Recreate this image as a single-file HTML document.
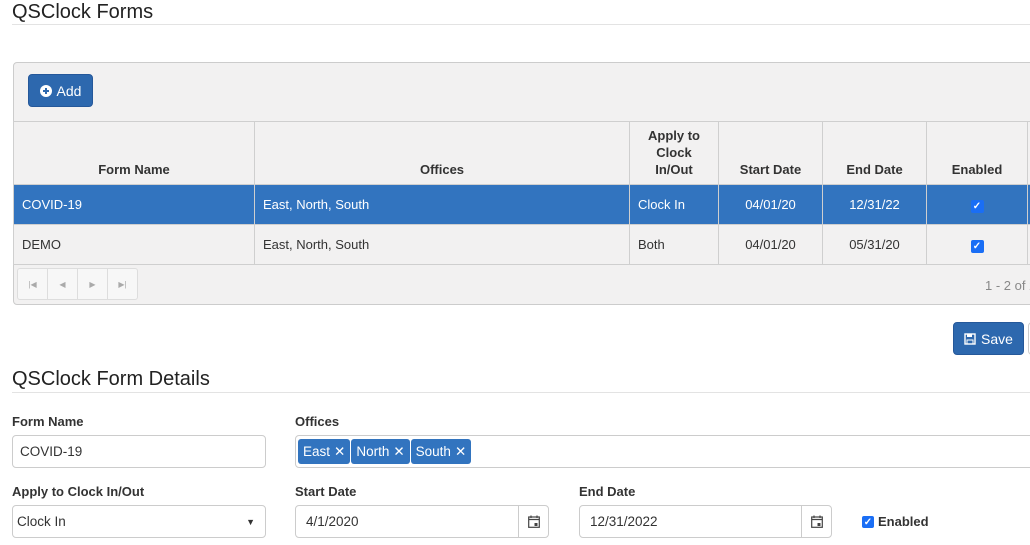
<!DOCTYPE html>
<html><head><style>
*{box-sizing:border-box;margin:0;padding:0}
body{width:1030px;height:545px;overflow:hidden;background:#fff;font-family:"Liberation Sans",sans-serif;color:#333;position:relative;font-size:13px}
.a{position:absolute}
h1{position:absolute;font-weight:normal;font-size:20px;color:#222}
.hr{position:absolute;left:12px;right:0;height:1px;background:#e3e3e3}
.btn{position:absolute;background:#2d68ae;border:1px solid #25589a;border-radius:4px;color:#fff;font-size:14px;display:flex;align-items:center;justify-content:center;gap:5px}
table{position:absolute;border-collapse:collapse;left:13px;top:121px;table-layout:fixed;width:1034px}
td,th{border:1px solid #cfcfcf;padding:0 8px;font-size:13px;overflow:hidden;white-space:nowrap}
th{height:63px;vertical-align:bottom;padding-bottom:6px;font-weight:bold;text-align:center;line-height:17px;white-space:normal}
td{height:40px}
tr.sel td{background:#3274bf;color:#fff}
.c{text-align:center}
.cb{display:inline-block;width:13px;height:13px;background:#1a6ef5;border-radius:2px;color:#fff;font-size:10px;line-height:13px;text-align:center;font-weight:bold}
label{position:absolute;font-weight:bold;font-size:13px;color:#333}
.inp{position:absolute;border:1px solid #ccc;border-radius:4px;height:33px;background:#fff;font-size:13.5px;padding-left:7px;display:flex;align-items:center}
.chip{background:#3274bf;color:#fff;border-radius:3px;height:25px;padding:0 5px;display:flex;align-items:center;gap:4px;margin-right:1px;font-size:13.5px}
.add{position:absolute;right:0;top:0;bottom:0;width:30px;border-left:1px solid #ccc;display:flex;align-items:center;justify-content:center}
</style></head><body>
<h1 style="left:12px;top:1px">QSClock Forms</h1>
<div class="hr" style="top:24px"></div>
<div class="a" style="left:13px;top:62px;width:1030px;height:243px;background:#f2f1f1;border:1px solid #ccc;border-radius:4px"></div>
<div class="btn" style="left:28px;top:74px;width:65px;height:33px"><svg width="12" height="12" viewBox="0 0 12 12"><circle cx="6" cy="6" r="6" fill="#fff"/><path d="M6 3v6M3 6h6" stroke="#2d68ae" stroke-width="2"/></svg>Add</div>
<table>
<colgroup><col style="width:241px"><col style="width:375px"><col style="width:89px"><col style="width:104px"><col style="width:104px"><col style="width:101px"><col style="width:20px"></colgroup>
<tr><th>Form Name</th><th>Offices</th><th>Apply to<br>Clock<br>In/Out</th><th>Start Date</th><th>End Date</th><th>Enabled</th><th></th></tr>
<tr class="sel"><td>COVID-19</td><td>East, North, South</td><td>Clock In</td><td class="c">04/01/20</td><td class="c">12/31/22</td><td class="c"><span class="cb">✓</span></td><td></td></tr>
<tr><td>DEMO</td><td>East, North, South</td><td>Both</td><td class="c">04/01/20</td><td class="c">05/31/20</td><td class="c"><span class="cb">✓</span></td><td></td></tr>
</table>
<div class="a" style="left:17px;top:268px;width:121px;height:32px;border:1px solid #ddd;border-radius:3px;background:#f7f7f7;display:flex;color:#aaa;font-size:8px">
<div style="flex:1;border-right:1px solid #ddd;display:flex;align-items:center;justify-content:center">|◀</div>
<div style="flex:1;border-right:1px solid #ddd;display:flex;align-items:center;justify-content:center">◀</div>
<div style="flex:1;border-right:1px solid #ddd;display:flex;align-items:center;justify-content:center">▶</div>
<div style="flex:1;display:flex;align-items:center;justify-content:center">▶|</div></div>
<div class="a" style="left:985px;top:278px;color:#888;font-size:13px;white-space:nowrap">1 - 2 of 2</div>
<div class="btn" style="left:953px;top:322px;width:71px;height:33px"><svg width="12" height="12" viewBox="0 0 12 12"><rect x="1" y="1" width="10" height="10" fill="none" stroke="#fff" stroke-width="1.4"/><rect x="3" y="1" width="5" height="3" fill="#fff"/><rect x="3" y="7" width="6" height="4" fill="none" stroke="#fff"/></svg>Save</div>
<div class="a" style="left:1028px;top:322px;width:10px;height:33px;border:1px solid #ccc;border-radius:4px"></div>
<h1 style="left:12px;top:368px">QSClock Form Details</h1>
<div class="hr" style="top:392px"></div>
<label style="left:12px;top:414px">Form Name</label>
<div class="inp" style="left:12px;top:435px;width:254px">COVID-19</div>
<label style="left:295px;top:414px">Offices</label>
<div class="inp" style="left:295px;top:435px;width:740px;padding-left:2px">
<div class="chip">East <span>✕</span></div><div class="chip">North <span>✕</span></div><div class="chip">South <span>✕</span></div></div>
<label style="left:12px;top:484px">Apply to Clock In/Out</label>
<div class="inp" style="left:12px;top:505px;width:254px;padding-left:4px">Clock In<span style="position:absolute;right:10px;font-size:9px">▼</span></div>
<label style="left:295px;top:484px">Start Date</label>
<div class="inp" style="left:295px;top:505px;width:254px;padding-left:10px">4/1/2020<div class="add"><svg width="12" height="13" viewBox="0 0 12 13"><rect x="0.7" y="2" width="10.6" height="10.3" fill="none" stroke="#444" stroke-width="1.2"/><path d="M1 4.5h10M3 0.5v2.5M9 0.5v2.5" stroke="#444" stroke-width="1.2"/><rect x="6.5" y="8" width="3" height="3" fill="#444"/></svg></div></div>
<label style="left:579px;top:484px">End Date</label>
<div class="inp" style="left:579px;top:505px;width:253px;padding-left:10px">12/31/2022<div class="add"><svg width="12" height="13" viewBox="0 0 12 13"><rect x="0.7" y="2" width="10.6" height="10.3" fill="none" stroke="#444" stroke-width="1.2"/><path d="M1 4.5h10M3 0.5v2.5M9 0.5v2.5" stroke="#444" stroke-width="1.2"/><rect x="6.5" y="8" width="3" height="3" fill="#444"/></svg></div></div>
<div class="a" style="left:862px;top:514px;display:flex;align-items:center;gap:4px;font-weight:bold"><span class="cb" style="width:12px;height:12px">✓</span>Enabled</div>
</body></html>
